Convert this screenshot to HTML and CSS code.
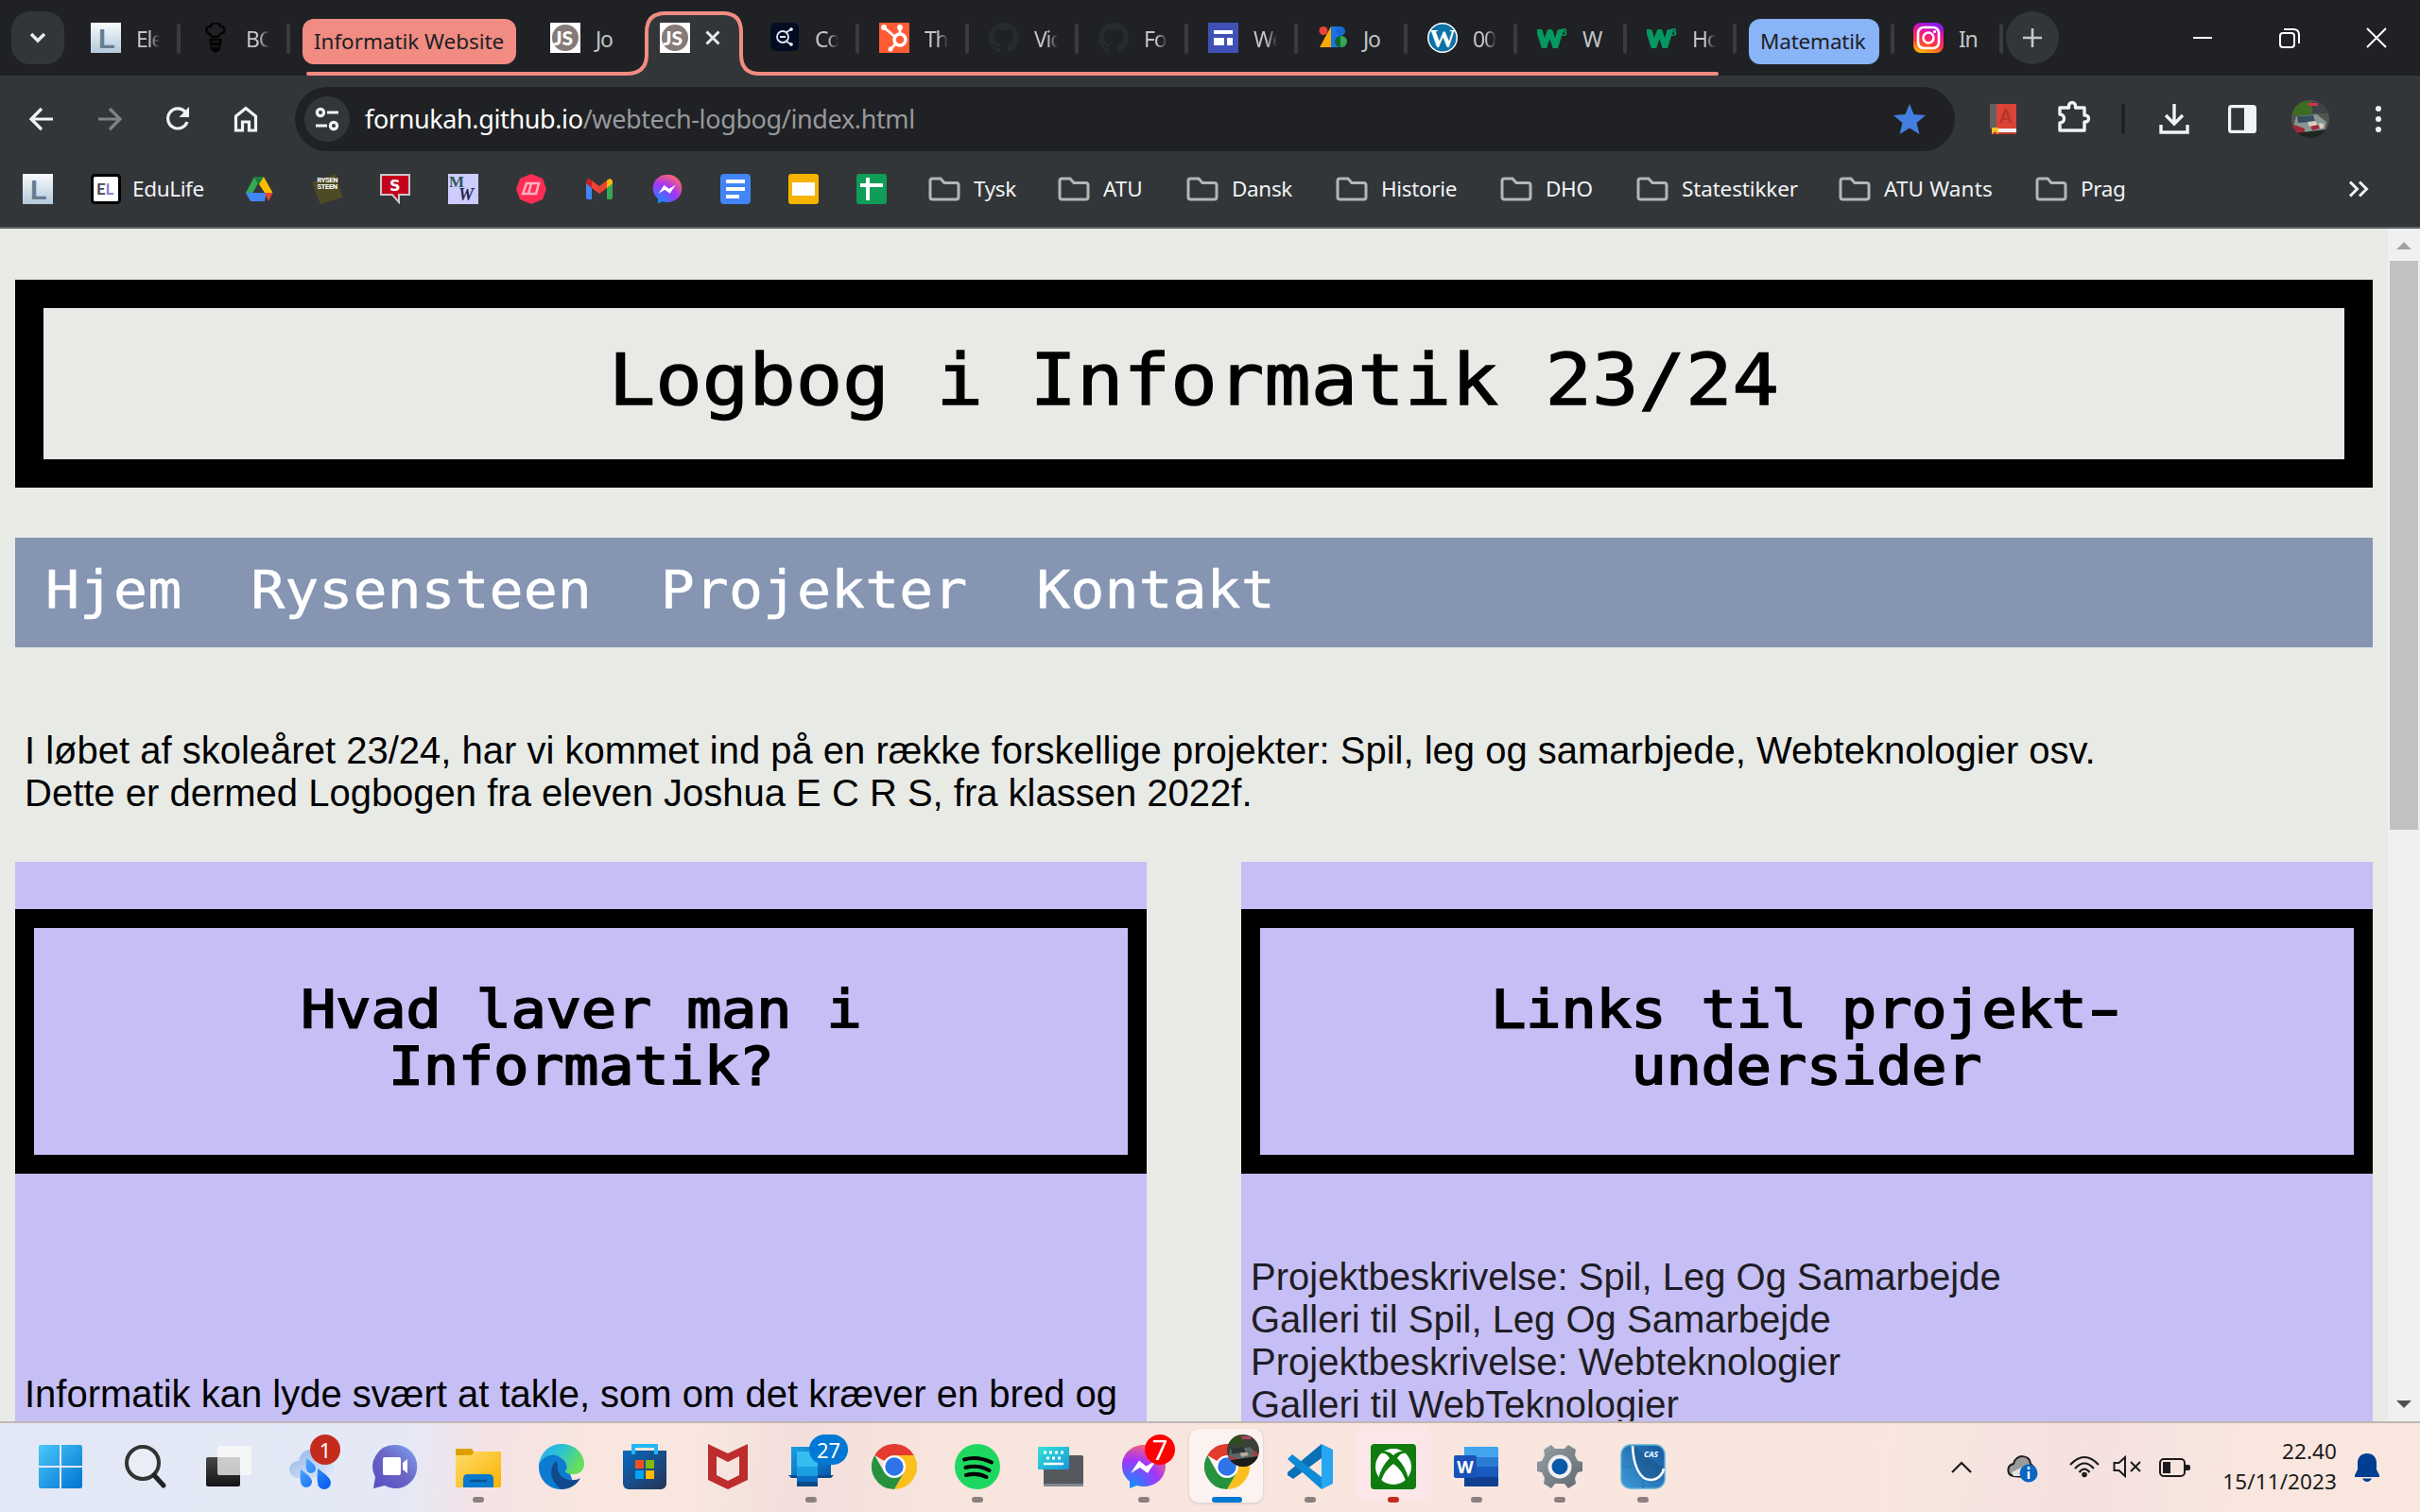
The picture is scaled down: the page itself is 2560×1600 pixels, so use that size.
FILE: index.html
```html
<!DOCTYPE html>
<html lang="da">
<head>
<meta charset="utf-8">
<title>Logbog i Informatik 23/24</title>
<link rel="stylesheet" href="styles.css">
</head>
<body>
<svg class="defs" width="0" height="0">
  <defs>
    <linearGradient id="gL" x1="0" y1="0" x2="0" y2="1"><stop offset="0" stop-color="#f7fbfd"/><stop offset="1" stop-color="#b4c9da"/></linearGradient>
    <linearGradient id="gWin" x1="0" y1="0" x2="1" y2="1"><stop offset="0" stop-color="#4cc8fb"/><stop offset="1" stop-color="#0072d2"/></linearGradient>
    <linearGradient id="gDark" x1="0" y1="0" x2="0" y2="1"><stop offset="0" stop-color="#484848"/><stop offset="1" stop-color="#141414"/></linearGradient>
    <radialGradient id="gMsg" cx=".2" cy="1" r="1.1"><stop offset="0" stop-color="#0695ff"/><stop offset=".6" stop-color="#a334fa"/><stop offset="1" stop-color="#ff6968"/></radialGradient>
    <linearGradient id="gCloud" x1="0" y1="0" x2="1" y2="1"><stop offset="0" stop-color="#8fb3ea"/><stop offset=".6" stop-color="#c4d6f2"/><stop offset="1" stop-color="#e6eefb"/></linearGradient>
    <linearGradient id="gDrop" x1="0" y1="0" x2="1" y2="1"><stop offset="0" stop-color="#5ab0ff"/><stop offset="1" stop-color="#0058f0"/></linearGradient>
    <linearGradient id="gChat" x1="1" y1="0" x2="0" y2="1"><stop offset="0" stop-color="#7fa4f5"/><stop offset=".5" stop-color="#6b63c4"/><stop offset="1" stop-color="#5450c4"/></linearGradient>
    <linearGradient id="gFold" x1="0" y1="0" x2="1" y2="1"><stop offset="0" stop-color="#ffdc6c"/><stop offset="1" stop-color="#f8b200"/></linearGradient>
    <linearGradient id="gEdge" x1="0" y1="0" x2="1" y2=".4"><stop offset="0" stop-color="#2aa9ee"/><stop offset=".5" stop-color="#2bc3d2"/><stop offset="1" stop-color="#66e05a"/></linearGradient>
    <linearGradient id="gStore" x1="0" y1="0" x2="1" y2="1"><stop offset="0" stop-color="#0669bd"/><stop offset="1" stop-color="#283355"/></linearGradient>
    <linearGradient id="gPhone" x1="0" y1="0" x2="1" y2="1"><stop offset="0" stop-color="#1ba0e4"/><stop offset="1" stop-color="#0659ad"/></linearGradient>
    <linearGradient id="gKey" x1="0" y1="0" x2="1" y2="1"><stop offset="0" stop-color="#33e3d6"/><stop offset="1" stop-color="#1795dd"/></linearGradient>
    <linearGradient id="gCas" x1="0" y1="1" x2="1" y2="0"><stop offset="0" stop-color="#3f9ad8"/><stop offset="1" stop-color="#14559c"/></linearGradient>
    <linearGradient id="gGear" x1="0" y1="0" x2="1" y2="1"><stop offset="0" stop-color="#98a0a6"/><stop offset="1" stop-color="#5f686f"/></linearGradient>
    <linearGradient id="gIg" x1=".2" y1="1" x2=".5" y2="0"><stop offset="0" stop-color="#ffc400"/><stop offset=".35" stop-color="#ff3a3a"/><stop offset=".7" stop-color="#f0139a"/><stop offset="1" stop-color="#8a1cf0"/></linearGradient>
    <symbol id="folder" viewBox="0 0 34 26"><path d="M4.500 2h8.500l4 4.500h12.500a2.500 2.500 0 0 1 2.500 2.500v12.500a2.500 2.500 0 0 1-2.500 2.500h-25a2.500 2.500 0 0 1-2.500-2.500v-17a2.500 2.500 0 0 1 2.500-2.500z" fill="none" stroke="#b4b5b7" stroke-width="3"/></symbol>
    <symbol id="lfav" viewBox="0 0 32 32"><path fill="url(#gL)" d="M0 0h32v32H0z"/><text x="8" y="27" font-family="Liberation Sans" font-weight="bold" font-size="29" fill="#667c8e">L</text></symbol>
    <symbol id="jsfav" viewBox="0 0 32 32"><path fill="#fff" d="M0 0h32v32H0z"/><circle cx="16" cy="16" r="14" fill="#857a78"/><text x="3.500" y="23.500" font-family="Lato" font-weight="900" font-size="21" fill="#fff">JS</text></symbol>
    <symbol id="w3" viewBox="0 0 32 32"><text x="0" y="25.500" font-family="Lato" font-weight="900" font-size="24" textLength="27" lengthAdjust="spacingAndGlyphs" fill="#059862" stroke="#059862" stroke-width="2.200">W</text><text x="25" y="14" font-family="Lato" font-weight="900" font-size="12" fill="#059862">3</text></symbol>
    <symbol id="github" viewBox="0 0 16 16"><path fill="#262b2e" d="M8 0C3.580 0 0 3.580 0 8c0 3.540 2.290 6.530 5.470 7.590.4.070.55-.17.55-.38 0-.19-.01-.82-.01-1.490-2.010.37-2.530-.49-2.690-.94-.09-.23-.48-.94-.82-1.130-.28-.15-.68-.52-.01-.53.63-.01 1.080.58 1.230.82.72 1.210 1.870.87 2.330.66.070-.52.28-.87.51-1.070-1.780-.2-3.640-.89-3.640-3.950 0-.87.31-1.590.82-2.150-.08-.2-.36-1.020.08-2.120 0 0 .67-.21 2.200.82a7.600 7.600 0 0 1 4 0c1.530-1.040 2.200-.82 2.200-.82.44 1.100.16 1.920.08 2.120.51.56.82 1.270.82 2.150 0 3.070-1.870 3.750-3.650 3.950.29.25.54.73.54 1.480 0 1.070-.01 1.930-.01 2.200 0 .21.15.46.55.38A8.010 8.010 0 0 0 16 8c0-4.420-3.580-8-8-8z"/></symbol>
    <symbol id="chrome" viewBox="0 0 48 48"><path fill="#e33b2e" d="M24 24L3.200 12A24 24 0 0 1 44.800 12z"/><path fill="#fcc01e" d="M24 12H44.800A24 24 0 0 1 24 48L34.400 30z"/><path fill="#27923e" d="M3.200 12A24 24 0 0 0 24 48L34.400 30 24 34 13.600 30z"/><circle cx="24" cy="24" r="12" fill="#fff"/><circle cx="24" cy="24" r="9.700" fill="#2f74e8"/></symbol>
    <symbol id="messenger" viewBox="0 0 48 48"><path fill="url(#gMsg)" d="M24 1C11 1 1 10.500 1 23c0 7 3 12.500 8 16.500V47l7.500-3c2.300.8 5 1 7.500 1 13 0 23-9.500 23-22S37 1 24 1z"/><path fill="#fff" d="M10 31l9-13.500 7.500 6 10.500-6L28 31l-8-6z"/></symbol>
  </defs>
</svg>

<header class="tabstrip">
  <div class="tab-search"><svg width="20" height="14" viewBox="0 0 20 14"><path d="M3 3l7 7 7-7" fill="none" stroke="#e8eaed" stroke-width="3.500"/></svg></div>
  <div class="tab"><svg class="fav"><use href="#lfav"/></svg><span class="tl">Ele</span></div>
  <div class="tab"><svg class="fav" viewBox="0 0 32 32"><g fill="none" stroke="#050505" stroke-width="2.500"><path d="M10 12c-6-2-4-9 1-8 1-5 9-5 10 0 6-1 6 7 0 8l-2 3h-7z"/></g><path d="M9 17h14l-2 12-5 3-5-3z" fill="#050505"/><path d="M12 20h8M12 25h8" stroke="#202124" stroke-width="1.500"/></svg><span class="tl">BC</span></div>
  <div class="tab-group">
    <div class="chip chip-red"><span class="chip-info">Informatik Website</span></div>
    <div class="tab plain"><svg class="fav"><use href="#jsfav"/></svg><span class="tl">Jo</span></div>
    <div class="tab active">
      <svg class="tab-shape" width="160" height="80" viewBox="0 0 160 80"><path d="M0 78h4Q26 78 26 58V34Q26 14 46 14H107Q126 14 126 34V58Q126 78 146 78H152V80H0z" fill="#333639"/><path d="M0 78h4Q26 78 26 58V34Q26 14 46 14H107Q126 14 126 34V58Q126 78 146 78H152" fill="none" stroke="#f28b82" stroke-width="4"/></svg>
      <svg class="fav"><use href="#jsfav"/></svg>
      <svg class="tab-close" width="16" height="16" viewBox="0 0 16 16"><path d="M1.500 1.500l13 13M14.500 1.500l-13 13" stroke="#e8eaed" stroke-width="3"/></svg>
    </div>
    <div class="tab"><svg class="fav" viewBox="0 0 32 32"><rect x="1" width="30" height="30" rx="6" fill="#020c22"/><g fill="none" stroke="#dfe6f5" stroke-width="1.800"><circle cx="14" cy="15" r="6"/><path d="M18 10l5-3M18 20l5 3M11 15h6"/></g><circle cx="23" cy="7" r="1.800" fill="#fff"/><circle cx="23" cy="23" r="1.800" fill="#fff"/></svg><span class="tl">Co</span></div>
    <div class="tab"><svg class="fav" viewBox="0 0 32 32"><path fill="#ff5c35" d="M0 0h32v32H0z"/><path d="M5 5l13 11M22 5v8M17 23l-5 5" stroke="#fff" stroke-width="2.800"/><circle cx="22" cy="18" r="6" fill="none" stroke="#fff" stroke-width="3.500"/><circle cx="5" cy="5" r="3" fill="#fff"/><circle cx="22" cy="5" r="3" fill="#fff"/><circle cx="12" cy="28" r="2.500" fill="#fff"/></svg><span class="tl">Th</span></div>
    <div class="tab"><svg class="fav"><use href="#github"/></svg><span class="tl">Vid</span></div>
    <div class="tab"><svg class="fav"><use href="#github"/></svg><span class="tl">Fo</span></div>
    <div class="tab"><svg class="fav" viewBox="0 0 32 32"><path fill="#3f51b5" d="M0 0h32v32H0z"/><path fill="#fff" d="M6 8h20v4H6zM6 16h11v8H6zM20 16h6v8h-6z"/></svg><span class="tl">We</span></div>
    <div class="tab"><svg class="fav" viewBox="0 0 32 32"><circle cx="6" cy="8.500" r="4.500" fill="#ea4335"/><path fill="#f9ab00" d="M14 4v22H2z"/><path fill="#1a73e8" d="M14 4h10v22H14z"/><circle cx="24" cy="9" r="5" fill="#1967d2"/><circle cx="25" cy="20" r="6" fill="#34a853"/><path fill="#0d652d" d="M24 14v12a6 6 0 0 1 0-12z"/></svg><span class="tl wide">Jo</span></div>
    <div class="tab"><svg class="fav" viewBox="0 0 32 32"><circle cx="16" cy="16" r="16" fill="#fff"/><circle cx="16" cy="16" r="14.500" fill="#0d72a5"/><text x="16" y="25.500" text-anchor="middle" font-family="Liberation Serif" font-weight="bold" font-size="28" fill="#fff">W</text></svg><span class="tl">00</span></div>
    <div class="tab"><svg class="fav"><use href="#w3"/></svg><span class="tl wide">W</span></div>
    <div class="tab"><svg class="fav"><use href="#w3"/></svg><span class="tl">Ho</span></div>
  </div>
  <div class="chip chip-blue"><span class="chip-mat">Matematik</span></div>
  <div class="tab lead"><svg class="fav" viewBox="0 0 32 32"><rect width="32" height="32" rx="8" fill="url(#gIg)"/><g fill="none" stroke="#fff" stroke-width="2.600"><rect x="5" y="5" width="22" height="22" rx="6"/><circle cx="16" cy="16" r="5.500"/></g><circle cx="22.500" cy="9.500" r="1.600" fill="#fff"/></svg><span class="tl wide">In</span></div>
  <div class="newtab"><svg width="22" height="22" viewBox="0 0 22 22"><path d="M11 1v20M1 11h20" stroke="#c7c9cb" stroke-width="2.600"/></svg></div>
  <div class="winctl">
    <svg width="20" height="20" viewBox="0 0 20 20"><path d="M0 10h20" stroke="#fff" stroke-width="2"/></svg>
    <svg width="22" height="22" viewBox="0 0 22 22"><rect x="1" y="6" width="15" height="15" rx="3" fill="none" stroke="#fff" stroke-width="2"/><path d="M5 2h10q6 0 6 6v9" fill="none" stroke="#fff" stroke-width="2"/></svg>
    <svg width="20" height="20" viewBox="0 0 20 20"><path d="M0 0l20 20M20 0L0 20" stroke="#fff" stroke-width="2"/></svg>
  </div>
</header>

<div class="toolbar">
  <div class="nav-icons">
    <svg viewBox="0 0 28 28"><path d="M26 14H4M14 3L3 14l11 11" fill="none" stroke="#f1f3f4" stroke-width="3.200"/></svg>
    <svg viewBox="0 0 28 28"><path d="M2 14h22M14 3l11 11-11 11" fill="none" stroke="#808386" stroke-width="3.200"/></svg>
    <svg viewBox="0 0 28 28"><path d="M24 17A10.500 10.500 0 1 1 22 6.500" fill="none" stroke="#f1f3f4" stroke-width="3.200"/><path d="M26 1v11H15.500z" fill="#f1f3f4"/></svg>
    <svg viewBox="0 0 28 28"><path d="M3.500 11L14 2.500 24.500 11v15H17.500v-9h-7v9H3.500z" fill="none" stroke="#f1f3f4" stroke-width="3.200"/></svg>
  </div>
  <div class="omnibox">
    <div class="site-info"><svg width="26" height="24" viewBox="0 0 26 24"><g fill="none" stroke="#f1f3f4" stroke-width="3.200"><circle cx="6" cy="5" r="3.600"/><path d="M13 5h12M1 19h12"/><circle cx="20" cy="19" r="3.600"/></g></svg></div>
    <div class="url"><b>fornukah.github.io</b><span>/webtech-logbog/index.html</span></div>
    <svg width="34" height="32" viewBox="0 0 34 32"><path fill="#437fe0" d="M17 0l4.500 11L34 12l-9.500 8 3 12L17 25.500 6.500 32l3-12L0 12l12.500-1z"/></svg>
  </div>
  <div class="actions">
    <svg class="a-book" width="28" height="32" viewBox="0 0 28 32"><path fill="#db4437" d="M0 0h28v26H0z"/><path fill="#616161" d="M0 0h7v26H0z"/><path fill="#f4f4f4" d="M8 26h20v4H8z"/><path fill="#c5372c" d="M2 26h6v4h20v2H2z"/><path fill="#fbc02d" d="M2 25h7v7l-3.500-3L2 32z"/><text x="10" y="20" font-family="Roboto" font-weight="bold" font-size="20" fill="#b8352a">A</text></svg>
    <svg class="a-ext" width="36" height="36" viewBox="0 0 36 36"><path d="M3 9h9.500v-2a3.500 3.500 0 0 1 7 0v2H29v8h1a3.500 3.500 0 0 1 0 7h-1v9H3v-8c6 0 6-9 0-9z" fill="none" stroke="#f1f3f4" stroke-width="3.400" stroke-linejoin="round"/></svg>
    <i class="a-sep"></i>
    <svg class="a-dl" width="32" height="32" viewBox="0 0 32 32"><path d="M16 0v20M7 12l9 9 9-9M2 22v8h28v-8" fill="none" stroke="#f1f3f4" stroke-width="3.400"/></svg>
    <svg class="a-side" width="30" height="30" viewBox="0 0 30 30"><rect x="1.600" y="1.600" width="26.800" height="26.800" rx="2" fill="none" stroke="#f1f3f4" stroke-width="3.200"/><path fill="#f1f3f4" d="M17 1h11v28H17z"/></svg>
    <svg class="a-me" width="40" height="40" viewBox="0 0 40 40"><clipPath id="cme"><circle cx="20" cy="20" r="20"/></clipPath><g clip-path="url(#cme)"><path fill="#4d564c" d="M0 0h40v40H0z"/><path fill="#3f6b25" d="M0 4l16-4 8 8-4 8H0z"/><path fill="#3d434a" d="M22 2h18v12H22z"/><path fill="#d8324a" d="M18 3h10v3H18z"/><path fill="#8a9593" d="M5 17l22-2 10 8-2 10-22 3-11-8z"/><path fill="#35505c" d="M6 17l17-1 2 7-18 1z"/><path fill="#9d2a38" d="M0 25l14 5v6H4zM20 27l8-1 2 4-8 2z"/><path fill="#d9cdbd" d="M17 23l8-1 3 4-9 2zM29 24l5 1v4l-4 1z"/><path fill="#1e2420" d="M4 35l32-4v9H4z"/></g></svg>
    <svg class="a-more" width="6" height="30" viewBox="0 0 6 30"><g fill="#f1f3f4"><circle cx="3" cy="4" r="3"/><circle cx="3" cy="15" r="3"/><circle cx="3" cy="26" r="3"/></g></svg>
  </div>
</div>

<div class="bookmarks">
  <div class="bm"><svg class="fav"><use href="#lfav"/></svg></div>
  <div class="bm bm-edu"><svg class="fav" viewBox="0 0 32 32"><rect x="1.500" y="1.500" width="29" height="29" rx="3" fill="#fff" stroke="#000" stroke-width="3"/><text x="6" y="22" font-family="Lato" font-weight="bold" font-size="17" fill="#4a4a52">E<tspan fill="#8a86c8">L</tspan></text></svg><span>EduLife</span></div>
  <div class="bm"><svg class="fav" viewBox="0 0 32 32"><path fill="#34a853" d="M11 3l4 7-9 16L2 20z"/><path fill="#188038" d="M11 3h10l-5 9z"/><path fill="#fbbc04" d="M21 3l9.500 17H22L16 11z"/><path fill="#4285f4" d="M10 20h14l-2 9H7l-5-9z"/><path fill="#ea4335" d="M22 20h8.500L26 29z"/></svg></div>
  <div class="bm"><svg class="fav" viewBox="0 0 32 32"><path fill="#4e4a24" d="M0 9L25 0l7 25L9 32z"/><g font-family="Roboto" font-weight="bold" font-size="7.500" fill="#fff"><text x="5.500" y="9">RYSEN</text><text x="5.500" y="15.500">STEEN</text></g></svg></div>
  <div class="bm"><svg class="fav" viewBox="0 0 32 32"><path d="M1 1h30v21H20v8l-7-8H1z" fill="#c4001d" stroke="#c9c9c9" stroke-width="2"/><text x="10" y="18" font-family="DejaVu Sans" font-weight="bold" font-size="16" fill="#fff">S</text></svg></div>
  <div class="bm"><svg class="fav" viewBox="0 0 32 32"><path fill="#ccccff" d="M0 0h32v32H0z"/><text x="1" y="14" font-family="Liberation Serif" font-weight="bold" font-size="17" fill="#2c5558">M</text><text x="11" y="28" font-family="Liberation Serif" font-style="italic" font-weight="bold" font-size="18" fill="#262650">W</text></svg></div>
  <div class="bm"><svg class="fav" viewBox="0 0 32 32"><path fill="#ff2d55" d="M16 0l12 5 4 11-4 11-12 5L4 27 0 16 4 5z"/><path d="M15 10h-4L7 21h5M16 10h8l-3 11h-8z" fill="none" stroke="#ffb0c0" stroke-width="2.500"/></svg></div>
  <div class="bm"><svg class="fav" viewBox="0 0 32 32"><path fill="#4285f4" d="M2 9l6 5v13H4a2 2 0 0 1-2-2z"/><path fill="#34a853" d="M30 9l-6 5v13h4a2 2 0 0 0 2-2z"/><path fill="#ea4335" d="M8 7l8 6 8-6v8l-8 6-8-6z"/><path fill="#c5221f" d="M2 9c0-4 3-5 6-2v8l-6-5z"/><path fill="#fbbc04" d="M30 9c0-4-3-5-6-2v8l6-5z"/></svg></div>
  <div class="bm"><svg class="fav"><use href="#messenger"/></svg></div>
  <div class="bm"><svg class="fav" viewBox="0 0 32 32"><rect width="32" height="32" rx="4" fill="#4285f4"/><path fill="#fff" d="M6 6h20v4H6zM6 14h20v4H6zM6 22h14v4H6z"/></svg></div>
  <div class="bm"><svg class="fav" viewBox="0 0 32 32"><rect width="32" height="32" rx="3" fill="#f4b400"/><path fill="#fff" d="M4 9h24v14H4z"/></svg></div>
  <div class="bm"><svg class="fav" viewBox="0 0 32 32"><rect width="32" height="32" rx="3" fill="#0f9d58"/><path fill="#fff" d="M10 4h4v24h-4zM4 10h24v4H4z"/></svg></div>
  <div class="bm bf f1"><svg><use href="#folder"/></svg><span>Tysk</span></div>
  <div class="bm bf f2"><svg><use href="#folder"/></svg><span>ATU</span></div>
  <div class="bm bf f3"><svg><use href="#folder"/></svg><span>Dansk</span></div>
  <div class="bm bf f4"><svg><use href="#folder"/></svg><span>Historie</span></div>
  <div class="bm bf f5"><svg><use href="#folder"/></svg><span>DHO</span></div>
  <div class="bm bf f6"><svg><use href="#folder"/></svg><span>Statestikker</span></div>
  <div class="bm bf f7"><svg><use href="#folder"/></svg><span>ATU Wants</span></div>
  <div class="bm bf f8"><svg><use href="#folder"/></svg><span>Prag</span></div>
  <svg class="more" width="22" height="18" viewBox="0 0 22 18"><path d="M2 1.500L9.500 9 2 16.500M12 1.500L19.500 9 12 16.500" fill="none" stroke="#f1f3f4" stroke-width="3"/></svg>
</div>

<div class="viewport">
  <main>
    <h1><span>Logbog i Informatik 23/24</span></h1>
    <nav><div class="links"><a>Hjem</a><a>Rysensteen</a><a>Projekter</a><a>Kontakt</a></div></nav>
    <p class="intro">I løbet af skoleåret 23/24, har vi kommet ind på en række forskellige projekter: Spil, leg og samarbjede, Webteknologier osv.<br>Dette er dermed Logbogen fra eleven Joshua E C R S, fra klassen 2022f.</p>
    <div class="cols">
      <section>
        <h2><span>Hvad laver man i<br>Informatik?</span></h2>
        <p class="body">Informatik kan lyde svært at takle, som om det kræver en bred og</p>
      </section>
      <section>
        <h2><span>Links til projekt<i class="hyphen">-</i><br>undersider</span></h2>
        <ul>
          <li>Projektbeskrivelse: Spil, Leg Og Samarbejde</li>
          <li>Galleri til Spil, Leg Og Samarbejde</li>
          <li>Projektbeskrivelse: Webteknologier</li>
          <li>Galleri til WebTeknologier</li>
        </ul>
      </section>
    </div>
  </main>
  <div class="scrollbar">
    <svg width="16" height="8" viewBox="0 0 16 8"><path fill="#a3a3a3" d="M8 0l8 8H0z"/></svg>
    <div class="thumb"></div>
    <svg width="16" height="8" viewBox="0 0 16 8"><path fill="#505050" d="M0 0h16L8 8z"/></svg>
  </div>
</div>

<footer class="taskbar">
  <div class="apps">
    <div class="app start"><svg viewBox="0 0 48 48"><path fill="url(#gWin)" d="M3 1h20v22H1V3a2 2 0 0 1 2-2zM25 1h20a2 2 0 0 1 2 2v20H25zM1 25h22v22H3a2 2 0 0 1-2-2zM25 25h22v20a2 2 0 0 1-2 2H25z"/></svg></div>
    <div class="app"><svg viewBox="0 0 48 48"><circle cx="21" cy="20" r="17" fill="#e9edf5" stroke="#333" stroke-width="4"/><path d="M33 33l10 11" stroke="#222" stroke-width="5" stroke-linecap="round"/></svg></div>
    <div class="app"><svg viewBox="0 0 48 48"><rect y="14" width="36" height="31" rx="2" fill="url(#gDark)"/><rect x="12" y="2" width="36" height="31" rx="2" fill="#ededed" opacity=".8"/><path d="M36 2h10a2 2 0 0 1 2 2v27a2 2 0 0 1-2 2H36zM12 14V4a2 2 0 0 1 2-2h23v12z" fill="#f8f8f8" opacity=".8"/></svg></div>
    <div class="app"><svg viewBox="0 0 48 48"><path fill="url(#gCloud)" d="M9 36a9 9 0 0 1 0-18h1C12 2 35 1 37 19c14-1 15 17 2 17z"/><g fill="url(#gDrop)"><path d="M18 15c7 5 10 8 10 11a5 5 0 0 1-10 0c-1-3 0-7 0-11zM12 27c8 6 12 9 12 13a6 6 0 0 1-12 0c-1-4 0-8 0-13zM30 26c10 7 14 11 14 15a7 7 0 0 1-14 0c-1-4 0-9 0-15z"/></g></svg><em class="badge red">1</em></div>
    <div class="app"><svg viewBox="0 0 48 48"><path fill="url(#gChat)" d="M24 1A23 23 0 1 1 13 44L1 47l2-12A23 23 0 0 1 24 1z"/><rect x="11" y="14" width="19" height="19" rx="2" fill="#fff"/><path fill="#fff" d="M32 20l5-4v15l-5-4z"/></svg></div>
    <div class="app run"><svg viewBox="0 0 48 48"><path fill="#dda000" d="M0 5h17l4 6-3 5H0z"/><path fill="url(#gFold)" d="M0 12h16l5-4h27v36a2 2 0 0 1-2 2H2a2 2 0 0 1-2-2z"/><path fill="#087ace" d="M8 46V37q0-5 5-5h22q5 0 5 5v9z"/><path d="M15 39h18" stroke="#0b4f94" stroke-width="2.500"/></svg></div>
    <div class="app"><svg viewBox="0 0 48 48"><path fill="#0c7bd0" d="M0 22C2 12 14 9 20 12l8 6 8 22-12 8C10 48 0 38 0 24z"/><path fill="#114a8b" d="M18 18c-8 8-6 22 6 30 10 0 17-6 20-12-8 5-26 2-24-14z"/><path fill="url(#gEdge)" d="M0 22C2 8 12 0 24 0c14 0 24 10 24 21 0 8-6 11-12 11-5 0-9-2-8-4 3-2 2-8-3-12C17 8 6 11 0 22z"/></svg></div>
    <div class="app"><svg viewBox="0 0 48 48"><path fill="url(#gStore)" d="M1 7h46v35a6 6 0 0 1-6 6H7a6 6 0 0 1-6-6z"/><path d="M12 11V2h24v9" fill="none" stroke="#20b8f5" stroke-width="4"/><path fill="#f25022" d="M14 17h9v9h-9z"/><path fill="#7fba00" d="M25 17h9v9h-9z"/><path fill="#00a4ef" d="M14 28h9v9h-9z"/><path fill="#ffb900" d="M25 28h9v9h-9z"/></svg></div>
    <div class="app"><svg viewBox="0 0 48 48"><path fill="#bd2d2e" fill-rule="evenodd" d="M3 0l21 10L45 0v38L24 48 3 38zM12 13v20l12 6 12-6V13l-12 6z"/></svg></div>
    <div class="app run"><svg viewBox="0 0 48 48"><path fill="url(#gPhone)" d="M3 3h42v30H3z"/><path fill="#0c4a86" d="M0 33h48l-3 3H3z"/><path fill="#1c9ee2" d="M9 8h22v26H9z"/><path fill="#35bdf2" d="M9 8h22v16H9z"/><path fill="#0b6cc4" d="M9 34h22v6H9z"/><path fill="#0c4a86" d="M9 40h22v5H9z"/></svg><em class="badge blue">27</em></div>
    <div class="app"><svg><use href="#chrome"/></svg></div>
    <div class="app run"><svg viewBox="0 0 48 48"><circle cx="24" cy="24" r="24" fill="#1ed760"/><path d="M10 16.500q14-4 29 3M11.500 25q13-3.500 25 3M12 33q12-3 21.500 2" fill="none" stroke="#000" stroke-width="4" stroke-linecap="round"/></svg></div>
    <div class="app"><svg viewBox="0 0 48 48"><rect x="6" y="12" width="42" height="33" rx="2" fill="#55595e"/><path fill="#808890" d="M6 42h42v1q0 2-2 2H8q-2 0-2-2z"/><rect y="3" width="33" height="24" rx="1" fill="url(#gKey)"/><path d="M6 9h22M9 15h16" stroke="#fff" stroke-width="3" stroke-dasharray="3 3"/><path d="M6 21h21" stroke="#fff" stroke-width="2.500"/></svg></div>
    <div class="app run"><svg><use href="#messenger"/></svg><em class="badge hot">7</em></div>
    <div class="app current"><svg><use href="#chrome"/></svg><svg class="avatar" viewBox="0 0 40 40"><clipPath id="cav"><circle cx="20" cy="20" r="20"/></clipPath><g clip-path="url(#cav)"><path fill="#3b4039" d="M0 0h40v40H0z"/><path fill="#2e4d1c" d="M0 4L16 0l6 12H0z"/><path fill="#b0455a" d="M18 2h12v4H18z"/><path fill="#5f6664" d="M4 18l24-2 10 7-2 8-22 2-12-6z"/><path fill="#2a3636" d="M5 17l16-1 2 6-17 2z"/><path fill="#b9aca0" d="M16 23l9-1 2 4-9 2z"/><path fill="#a93a42" d="M0 26l12 4v3H4zM32 20l6 3v4h-5z"/><path fill="#191c18" d="M4 32l34-5v13H4z"/></g></svg></div>
    <div class="app run"><svg viewBox="0 0 48 48"><path fill="#0a6fb5" d="M36 0v15L6 37l-6-4v-3z"/><path fill="#0d8ad6" d="M0 16l5-5 31 24v13z"/><path fill="#27a6f2" d="M36 0l12 6v36l-12 6z"/></svg></div>
    <div class="app run alert"><svg viewBox="0 0 48 48"><rect width="48" height="48" rx="4" fill="#107c10"/><circle cx="24" cy="24" r="19" fill="#fff"/><path fill="#107c10" d="M13 8q5-1 11 4 6-5 11-4l2 2q-5-1-9 5 9 9 12 22l-3 2q-4-12-13-18-9 6-13 18l-3-2q3-13 12-22-4-6-9-5z"/></svg></div>
    <div class="app run"><svg viewBox="0 0 48 48"><path fill="#41a5ee" d="M11 3h35l1 1v10H11z"/><path fill="#2b7cd3" d="M11 14h36v10H11z"/><path fill="#185abd" d="M11 24h36v11H11z"/><path fill="#103f91" d="M11 35h36v9l-1 1H11z"/><rect y="12" width="24" height="24" rx="2" fill="#1a51b8"/><text x="12" y="30.500" text-anchor="middle" font-family="Open Sans" font-weight="bold" font-size="18" fill="#fff">W</text></svg></div>
    <div class="app run"><svg viewBox="0 0 48 48"><path fill="url(#gGear)" d="M15 1l4 4h10l4-4 8 5-1 6 3 6 5 1v10l-5 1-3 6 1 6-8 5-4-5H19l-4 5-8-5 1-6-3-6-5-1V19l5-1 3-6-1-6z"/><circle cx="24" cy="24" r="12.500" fill="#f0f1f3"/><circle cx="24" cy="24" r="8.500" fill="#0a58a8"/></svg></div>
    <div class="app run"><svg viewBox="0 0 48 48"><rect x="1" y="1" width="46" height="46" rx="10" fill="url(#gCas)" stroke="#55b0dc" stroke-width="1.500"/><path d="M2 24h20M24 38v9" stroke="#2a7dbb" stroke-width="2"/><path d="M13 2c1 22 8 36 19 36 8 0 13-6 14-12" fill="#174f80" fill-opacity=".5" stroke="#fff" stroke-width="2.500"/><text x="25" y="13.500" font-family="Open Sans" font-style="italic" font-weight="bold" font-size="8.500" fill="#fff">CAS</text></svg></div>
  </div>
  <div class="tray">
    <svg class="t-up" width="22" height="13" viewBox="0 0 22 13"><path d="M1 12L11 2l10 10" fill="none" stroke="#1b1b1b" stroke-width="2.200"/></svg>
    <svg class="t-cloud" width="34" height="30" viewBox="0 0 34 30"><path d="M7 22c-7-1-8-11 0-13C9-2 25-1 25 9l3 3-10 11z" fill="#9a9a9a" stroke="#1b1b1b" stroke-width="2"/><path fill="#e6e2e0" d="M5 18l12-6v10H7z"/><circle cx="23" cy="19" r="9.500" fill="#0a66c2"/><path d="M23 12v3M23 17v8" stroke="#fff" stroke-width="2.500"/></svg>
    <svg class="t-wifi" width="32" height="24" viewBox="0 0 32 24"><g fill="none" stroke="#1b1b1b" stroke-width="2.200"><path d="M1 10Q16-6 31 10M6 14Q16 3 26 14M10.500 18Q16 11 21.500 18"/></g><circle cx="16" cy="20.500" r="2.800" fill="#1b1b1b"/></svg>
    <svg class="t-vol" width="31" height="24" viewBox="0 0 31 24"><path d="M1.500 8h5L13 2v20l-6.500-6h-5zM19 7l10 10M29 7L19 17" fill="none" stroke="#1b1b1b" stroke-width="2"/></svg>
    <svg class="t-bat" width="33" height="20" viewBox="0 0 33 20"><rect x="1" y="1" width="26" height="18" rx="4" fill="none" stroke="#1b1b1b" stroke-width="2"/><path fill="#1b1b1b" d="M4 4h8v12H4zM28 7h3a2 2 0 0 1 2 2v2a2 2 0 0 1-2 2h-3z"/></svg>
    <div class="clock">22.40<br>15/11/2023</div>
    <svg class="t-bell" width="26" height="30" viewBox="0 0 26 30"><path fill="#003e92" d="M13 0c6 0 10 4 10 10v7l3 6v2H0v-2l3-6v-7C3 4 7 0 13 0zM8 26.500h10q-2 3.500-5 3.500t-5-3.500z"/></svg>
  </div>
</footer>
</body>
</html>
```
FILE: styles.css
```css
* { box-sizing: border-box; }
body {
  margin: 0;
  width: 2560px;
  height: 1600px;
  overflow: hidden;
  display: flex;
  flex-direction: column;
  background: #e8eae6;
  font-family: "Noto Sans", "Open Sans", sans-serif;
}
.defs { position: absolute; }
svg { display: block; flex: none; overflow: visible; }
.fav { width: 32px; height: 32px; overflow: hidden; }

/* tab strip */
.tabstrip { height: 80px; background: #202124; display: flex; align-items: center; color: #c3c5c8; }
.tab-search {
  width: 56px; height: 56px; margin: 0 8px 0 12px; border-radius: 20px;
  background: #333639; display: flex; align-items: center; justify-content: center; flex: none;
}
.tab { width: 116px; height: 80px; flex: none; position: relative; display: flex; align-items: center; padding-left: 20px; gap: 16px; font-size: 23px; }
.tab::after { content: ""; position: absolute; right: 1px; top: 25px; width: 4px; height: 32px; border-radius: 2px; background: #3a3b3e; }
.tab.plain::after, .tab.active::after { display: none; }
.tl {
  width: 25px; overflow: hidden; white-space: nowrap; letter-spacing: -1.2px; padding-top: 2px;
  -webkit-mask-image: linear-gradient(90deg, #000 55%, transparent);
  mask-image: linear-gradient(90deg, #000 55%, transparent);
}
.tab.plain .tl, .tl.wide { -webkit-mask-image: none; mask-image: none; overflow: visible; }
.tab.active { gap: 16px; z-index: 1; }
.tab-shape { position: absolute; left: -20px; top: 0; }
.active .fav, .tab-close { position: relative; }
.tab.lead { margin-left: 16px; }
.tab.lead::before { content: ""; position: absolute; left: -4px; top: 25px; width: 4px; height: 32px; border-radius: 2px; background: #3a3b3e; }
.tab-group { display: flex; align-items: center; height: 80px; position: relative; flex: none; }
.tab-group::before { content: ""; position: absolute; left: 16px; right: 20px; bottom: 0; height: 4px; border-radius: 2px; background: #f28b82; }
.chip { height: 48px; margin: 8px 0 0 12px; border-radius: 12px; color: #202124; font-size: 22.500px; display: flex; align-items: center; padding: 0 0 1px 12px; white-space: nowrap; flex: none; }
.chip-red { width: 226px; margin-right: 16px; background: #f28b82; }
.chip-blue { width: 138px; background: #8ab4f8; }
.chip-info { letter-spacing: -0.05px; }
.chip-mat { letter-spacing: -0.2px; }
.newtab { width: 56px; height: 56px; margin-left: 2px; border-radius: 50%; background: #333639; display: flex; align-items: center; justify-content: center; }
.winctl { margin-left: auto; margin-right: 36px; display: flex; align-items: center; gap: 71px; }

/* toolbar */
.toolbar { height: 84px; background: #333639; display: flex; align-items: center; padding-top: 8px; }
.nav-icons { display: flex; gap: 44px; padding-left: 30px; width: 312px; }
.nav-icons svg { width: 28px; height: 28px; }
.omnibox { width: 1756px; height: 68px; border-radius: 34px; background: #202124; display: flex; align-items: center; padding: 0 31px 0 10px; flex: none; }
.site-info { width: 48px; height: 48px; border-radius: 50%; background: #333639; display: flex; align-items: center; justify-content: center; }
.url { margin-left: 16px; padding-bottom: 1px; flex: 1; font-size: 27px; letter-spacing: -0.38px; color: #96999d; white-space: nowrap; }
.url b { font-weight: 400; color: #fff; }
.actions { flex: 1; display: flex; align-items: center; padding-left: 37px; }
.a-ext { margin-left: 43px; margin-top: -6px; }
.a-sep { width: 4px; height: 32px; border-radius: 2px; background: #202124; margin-left: 32px; }
.a-dl { margin-left: 36px; }
.a-side { margin-left: 41px; }
.a-me { margin-left: 37px; }
.a-more { margin-left: 49px; }

/* bookmarks bar */
.bookmarks { height: 78px; background: #333639; border-bottom: 2px solid #5f6368; padding: 0 54px 4px 24px; display: flex; align-items: center; color: #f1f3f4; font-size: 22.500px; letter-spacing: -0.35px; }
.bm { width: 72px; flex: none; display: flex; align-items: center; white-space: nowrap; }
.bm span { padding-bottom: 2px; }
.bm-edu { width: 162px; gap: 12px; }
.bf { gap: 14px; }
.bf svg { width: 34px; height: 26px; }
.f1 { width: 137px; margin-left: 4px; }
.f2 { width: 136px; letter-spacing: 0; }
.f3 { width: 158px; }
.f4 { width: 174px; }
.f5 { width: 144px; }
.f6 { width: 214px; letter-spacing: -0.15px; }
.f7 { width: 208px; letter-spacing: 0.15px; }
.more { margin-left: auto; }

/* page */
.viewport { height: 1262px; display: flex; flex: none; overflow: hidden; color: #000; font-family: "Liberation Sans", Arial, sans-serif; }
main { flex: 1; padding: 54px 16px 0; font-size: 40px; line-height: 45px; }
h1, h2, nav { font-family: "DejaVu Sans Mono", monospace; font-weight: 400; margin: 0; }
h1 { height: 220px; border: 30px solid #000; font-size: 74px; line-height: 153px; text-align: center; white-space: nowrap; }
h1 span, h2 span { display: inline-block; transform: scaleX(1.112); -webkit-text-stroke: 1.300px #000; }
nav { height: 116px; margin-top: 53px; padding-left: 32px; background: #8595b2; color: #fff; font-size: 55px; line-height: 110px; }
.links { display: inline-flex; gap: 67px; transform: scaleX(1.089); transform-origin: 0 0; -webkit-text-stroke: 0.500px #fff; }
p, ul { margin: 0; padding: 0; }
.intro { margin: 87px 0 50px; padding-left: 10px; white-space: nowrap; }
.cols { display: flex; justify-content: space-between; }
section { width: 1197px; height: 700px; padding-top: 50px; background: #c6bff5; }
h2 { height: 280px; border: 20px solid #000; padding-top: 56px; font-size: 55px; line-height: 60px; text-align: center; }
h2 span { transform: scaleX(1.12); -webkit-text-stroke-width: 1.800px; }
.hyphen { display: inline-block; font-style: normal; transform: scaleX(1.5); }
.body { padding: 211px 0 0 10px; white-space: nowrap; }
ul { list-style: none; padding: 87px 0 0 10px; color: #1f1d24; }
.scrollbar { width: 34px; background: #f0f0f0; display: flex; flex-direction: column; align-items: center; padding: 14px 0; }
.thumb { width: 30px; height: 602px; margin: 12px 0 auto; background: #c1c1c1; }

/* taskbar */
.taskbar {
  height: 96px; border-top: 2px solid #c2b6b4; display: flex; align-items: flex-start; padding-left: 22px; flex: none;
  background: linear-gradient(96deg, #e3e8f6 0, #e5e9f6 17%, #f5e2e6 20%, #f8e6df 24%, #f8e6df 29%, #f2dfdc 33%, #f8e5de 39%, #f8e6df 78%, #f4e1e0 86%, #f8e6df 92%);
}
.apps { display: flex; }
.app { width: 88px; height: 94px; position: relative; padding: 22px 20px 0; }
.app > svg { width: 48px; height: 48px; position: relative; }
.app.start > svg { left: -2px; }
.run::after { content: ""; position: absolute; left: 38px; top: 78px; width: 12px; height: 6px; border-radius: 3px; background: #8b807e; }
.alert::after { background: #c42b1c; }
.alert::before, .current::before { content: ""; position: absolute; left: 4px; top: 2px; width: 80px; height: 80px; border-radius: 10px; background: #fce6e8; }
.current::before { top: 6px; left: 4px; width: 78px; height: 78px; background: #fcf3f0; box-shadow: 0 1px 2px 1px #e2d4d0; }
.current::after { content: ""; position: absolute; left: 28px; top: 78px; width: 32px; height: 6px; border-radius: 3px; background: #0078d4; }
.app > .avatar { position: absolute; left: 44px; top: 12px; width: 34px; height: 34px; }
.badge { position: absolute; left: 42px; top: 12px; min-width: 32px; height: 32px; border-radius: 16px; color: #fff; font-style: normal; font-size: 22px; line-height: 32px; text-align: center; }
.red { background: #c42b1c; }
.blue { background: #0078d4; min-width: 41px; }
.hot { background: #f00; left: 45px; font-size: 29px; }
.tray { margin-left: auto; height: 94px; display: flex; align-items: center; padding: 0 43px 2px 0; }
.t-cloud { margin-left: 37px; margin-top: 6px; }
.t-wifi { margin-left: 32px; }
.t-vol { margin-left: 14px; }
.t-bat { margin-left: 18px; margin-top: 2px; }
.clock { width: 155px; text-align: right; font-size: 22.500px; line-height: 32px; letter-spacing: 0.1px; color: #1b1b1b; padding-bottom: 1px; }
.t-bell { margin-left: 19px; margin-top: 2px; }
```
